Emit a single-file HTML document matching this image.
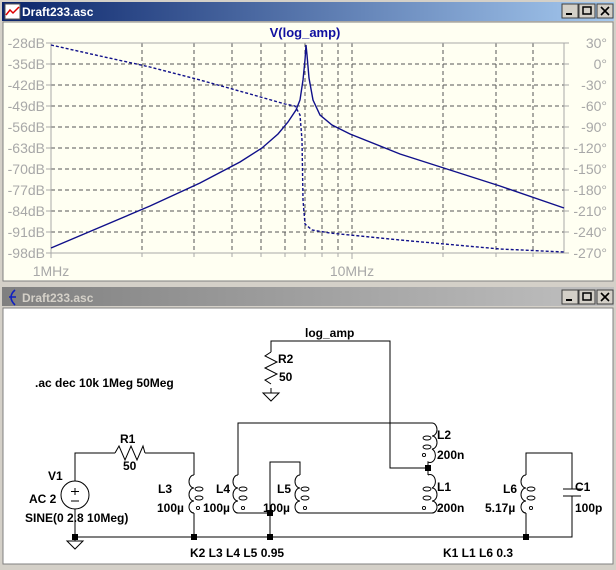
<!DOCTYPE html>
<html><head><meta charset="utf-8"><style>
html,body{margin:0;padding:0;background:#d4d0c8;}
svg{display:block}
.t{font-family:"Liberation Sans",sans-serif;font-weight:bold;font-size:12px;fill:#000}
.ax{font-family:"Liberation Sans",sans-serif;font-size:14px;fill:#a8a8a8}
</style></head><body>
<svg width="616" height="570" viewBox="0 0 616 570" xmlns="http://www.w3.org/2000/svg">
<defs>
<linearGradient id="ga" x1="0" x2="1"><stop offset="0" stop-color="#0a246a"/><stop offset="1" stop-color="#a6caf0"/></linearGradient>
<linearGradient id="gi" x1="0" x2="1"><stop offset="0" stop-color="#808080"/><stop offset="1" stop-color="#c0c0c0"/></linearGradient>
</defs>
<rect width="616" height="570" fill="#d4d0c8"/>
<!-- top window -->
<rect x="2" y="2" width="612" height="19" fill="url(#ga)"/>
<rect x="5" y="4" width="15" height="15" fill="#fff" stroke="#555" stroke-width="1"/>
<path d="M6 15 L10 10 L13 13 L19 7" stroke="#d00" stroke-width="1.5" fill="none"/>
<text x="22" y="16" font-family="Liberation Sans,sans-serif" font-weight="bold" font-size="12" fill="#fff">Draft233.asc</text>
<g font-family="Liberation Sans,sans-serif" font-size="11" font-weight="bold">
<rect x="562" y="4" width="16" height="14" fill="#d4d0c8" stroke="#404040"/><rect x="566" y="13" width="6" height="2" fill="#000"/>
<rect x="579" y="4" width="16" height="14" fill="#d4d0c8" stroke="#404040"/><rect x="583" y="7" width="8" height="7" fill="none" stroke="#000" stroke-width="1.5"/>
<rect x="597" y="4" width="16" height="14" fill="#d4d0c8" stroke="#404040"/><path d="M601 7 L609 15 M609 7 L601 15" stroke="#000" stroke-width="1.6"/>
</g>
<rect x="3" y="22" width="610" height="259" fill="#fffff2" stroke="#808080"/>
<text x="305" y="37" text-anchor="middle" font-family="Liberation Sans,sans-serif" font-weight="bold" font-size="13" fill="#1010a0">V(log_amp)</text>
<!-- grid -->
<g stroke="#555" stroke-width="1" stroke-dasharray="4,3" fill="none">
<path d="M51 64H564M51 85H564M51 106H564M51 127H564M51 148H564M51 169H564M51 190H564M51 211H564M51 232H564"/>
<path d="M142 43V253M194 43V253M232 43V253M261 43V253M285 43V253M305 43V253M322 43V253M338 43V253M352 43V253M443 43V253M496 43V253M533 43V253"/>
</g>
<g stroke="#a8a8a8" stroke-width="1" fill="none">
<rect x="51" y="43" width="513" height="210"/>
<path d="M46 43H51M46 64H51M46 85H51M46 106H51M46 127H51M46 148H51M46 169H51M46 190H51M46 211H51M46 232H51M46 253H51"/>
<path d="M564 43H569M564 64H569M564 85H569M564 106H569M564 127H569M564 148H569M564 169H569M564 190H569M564 211H569M564 232H569M564 253H569"/>
<path d="M51 253V258M142 253V257M194 253V257M232 253V257M261 253V257M285 253V257M305 253V257M322 253V257M338 253V257M352 253V259M443 253V257M496 253V257M533 253V257"/>
</g>
<g class="ax" text-anchor="end">
<text x="45" y="48">-28dB</text><text x="45" y="69">-35dB</text><text x="45" y="90">-42dB</text><text x="45" y="111">-49dB</text><text x="45" y="132">-56dB</text><text x="45" y="153">-63dB</text><text x="45" y="174">-70dB</text><text x="45" y="195">-77dB</text><text x="45" y="216">-84dB</text><text x="45" y="237">-91dB</text><text x="45" y="258">-98dB</text>
<text x="607" y="48">30°</text><text x="607" y="69">0°</text><text x="607" y="90">-30°</text><text x="607" y="111">-60°</text><text x="607" y="132">-90°</text><text x="607" y="153">-120°</text><text x="607" y="174">-150°</text><text x="607" y="195">-180°</text><text x="607" y="216">-210°</text><text x="607" y="237">-240°</text><text x="607" y="258">-270°</text>
</g>
<text class="ax" x="51" y="276" text-anchor="middle">1MHz</text>
<text class="ax" x="352" y="276" text-anchor="middle">10MHz</text>
<path d="M51 248 L150 206 L200 183 L240 162 L262 148 L278 134 L288 122 L296 110 L300 100 L303 80 L305 60 L306 45 L307 55 L309 78 L313 100 L320 115 L332 125 L350 134 L400 154 L450 170 L500 186 L564 208" stroke="#10108a" stroke-width="1.4" fill="none"/>
<path d="M51 45 L100 56 L150 67 L200 80 L250 94 L285 104 L295 106 L300 115 L302 140 L303 200 L305 224 L312 230 L330 233 L400 240 L500 249 L564 252" stroke="#10108a" stroke-width="1.4" stroke-dasharray="3,2" fill="none"/>
<!-- second window -->
<rect x="0" y="283" width="616" height="3" fill="#d4d0c8"/>
<rect x="2" y="287" width="612" height="19" fill="url(#gi)"/>
<path d="M15 290 Q7 297 15 305 M9 297 L16 297" stroke="#1020c0" stroke-width="1.6" fill="none"/>
<text x="22" y="302" font-family="Liberation Sans,sans-serif" font-weight="bold" font-size="12" fill="#d4d0c8">Draft233.asc</text>
<rect x="562" y="290" width="16" height="14" fill="#d4d0c8" stroke="#404040"/><rect x="566" y="299" width="6" height="2" fill="#000"/>
<rect x="579" y="290" width="16" height="14" fill="#d4d0c8" stroke="#404040"/><rect x="583" y="293" width="8" height="7" fill="none" stroke="#000" stroke-width="1.5"/>
<rect x="597" y="290" width="16" height="14" fill="#d4d0c8" stroke="#404040"/><path d="M601 293 L609 301 M609 293 L601 301" stroke="#000" stroke-width="1.6"/>
<rect x="3" y="308" width="610" height="256" fill="#fff" stroke="#808080"/>
<!-- schematic wires -->
<g stroke="#000" stroke-width="1" fill="none">
<path d="M271 352V341H390V468H428"/>
<path d="M271 388V393M263 393H279L271 401Z"/>
<path d="M271 352 l-6 4 l12 6 l-12 6 l12 6 l-12 6 l6 4"/>
<path d="M75 481V453H115 M145 453H194V475"/>
<path d="M115 453 l4 -7 l6 14 l6 -14 l6 14 l6 -14 l2 7"/>
<circle cx="75" cy="495" r="14"/>
<path d="M75 509V537 M75 537V541 M67 541H83L75 549Z"/>
<path d="M75 488V495M71 491.5H79M71 501H79"/>
<path d="M75 537H572V496 M572 489V453H526V475"/>
<path d="M563 489H581M563 496H581"/>
<path d="M194 513V537 M238 475V423H432 M238 513H270V537 M270 513V462H300V475 M300 513H433 M526 513V537"/>
<path d="M428 468V475"/>
<!-- inductors: bulge left -->
<path d="M194 475 a5 6.5 0 0 0 0 13 a5 6.5 0 0 0 0 13 a5 6 0 0 0 0 12"/>
<path d="M238 475 a5 6.5 0 0 0 0 13 a5 6.5 0 0 0 0 13 a5 6 0 0 0 0 12"/>
<path d="M300 475 a5 6.5 0 0 0 0 13 a5 6.5 0 0 0 0 13 a5 6 0 0 0 0 12"/>
<path d="M526 475 a5 6.5 0 0 0 0 13 a5 6.5 0 0 0 0 13 a5 6 0 0 0 0 12"/>
<!-- bulge right -->
<path d="M432 423 a5 6.5 0 0 1 0 13 a5 6.5 0 0 1 0 13 a5 6.5 0 0 1 -4 13 V468"/>
<path d="M428 475 a5 6.5 0 0 1 4 13 a5 6.5 0 0 1 0 13 a5 6 0 0 1 0 12"/>
<!-- loops -->
<g stroke-width="0.9">
<ellipse cx="199" cy="489" rx="4" ry="2"/><ellipse cx="199" cy="498" rx="4" ry="2"/><circle cx="198" cy="508" r="1.6"/>
<ellipse cx="243" cy="489" rx="4" ry="2"/><ellipse cx="243" cy="498" rx="4" ry="2"/><circle cx="243" cy="508" r="1.6"/>
<ellipse cx="305" cy="489" rx="4" ry="2"/><ellipse cx="305" cy="498" rx="4" ry="2"/><circle cx="305" cy="508" r="1.6"/>
<ellipse cx="531" cy="489" rx="4" ry="2"/><ellipse cx="531" cy="498" rx="4" ry="2"/><circle cx="531" cy="508" r="1.6"/>
<ellipse cx="427" cy="438" rx="4" ry="2"/><ellipse cx="427" cy="447" rx="4" ry="2"/><circle cx="424" cy="455" r="1.6"/>
<ellipse cx="427" cy="489" rx="4" ry="2"/><ellipse cx="427" cy="498" rx="4" ry="2"/><circle cx="424" cy="508" r="1.6"/>
</g>
</g>
<g fill="#000">
<rect x="72" y="534" width="6" height="6"/><rect x="191" y="534" width="6" height="6"/><rect x="267" y="534" width="6" height="6"/><rect x="523" y="534" width="6" height="6"/><rect x="267" y="510" width="6" height="6"/><rect x="425" y="465" width="6" height="6"/>
</g>
<g class="t">
<text x="305" y="337">log_amp</text>
<text x="278" y="363">R2</text><text x="279" y="381">50</text>
<text x="35" y="387">.ac dec 10k 1Meg 50Meg</text>
<text x="120" y="443">R1</text><text x="123" y="470">50</text>
<text x="48" y="480">V1</text><text x="29" y="503">AC 2</text><text x="25" y="522">SINE(0 2.8 10Meg)</text>
<text x="158" y="493">L3</text><text x="157" y="512">100µ</text>
<text x="216" y="493">L4</text><text x="203" y="512">100µ</text>
<text x="277" y="493">L5</text><text x="263" y="512">100µ</text>
<text x="437" y="439">L2</text><text x="437" y="459">200n</text>
<text x="437" y="491">L1</text><text x="437" y="512">200n</text>
<text x="503" y="493">L6</text><text x="485" y="512">5.17µ</text>
<text x="575" y="491">C1</text><text x="575" y="512">100p</text>
<text x="190" y="557">K2 L3 L4 L5 0.95</text>
<text x="443" y="557">K1 L1 L6 0.3</text>
</g>
</svg>
</body></html>
